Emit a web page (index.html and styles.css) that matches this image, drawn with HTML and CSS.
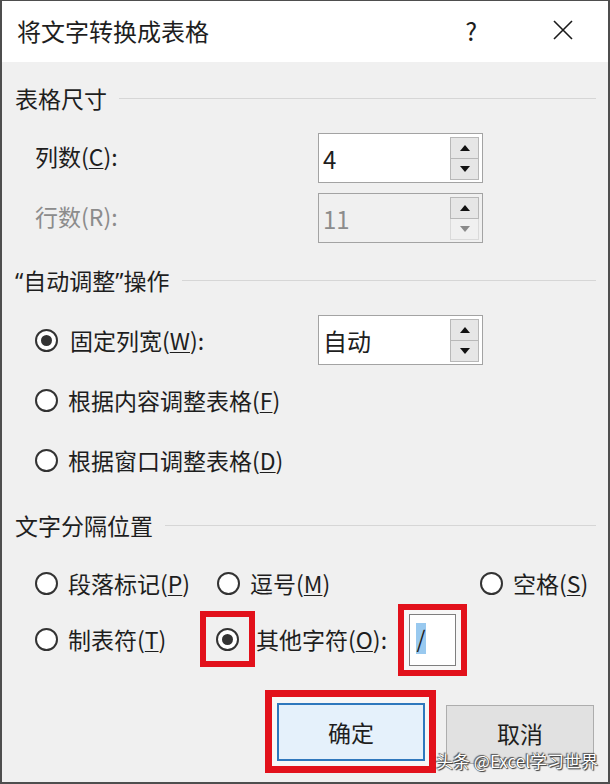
FILE: index.html
```html
<!DOCTYPE html>
<html lang="zh-CN">
<head>
    <meta charset="UTF-8">
    <meta name="viewport" content="width=device-width, initial-scale=1.0">
    <title>将文字转换成表格</title>
    <link rel="stylesheet" href="styles.css">
</head>
<body>
    <div class="window">
        <div class="titlebar">
            <span class="title">将文字转换成表格</span>
            <span class="help">?</span>
            <span class="close">
                <svg width="22" height="22" viewBox="0 0 22 22">
                    <path d="M2 2 L20 20 M20 2 L2 20" stroke="#1a1a1a" stroke-width="1.6" fill="none"/>
                </svg>
            </span>
        </div>

        <div class="content">
            <div class="group-title first">表格尺寸</div>

            <div class="row">
                <span class="field-label">列数(<u>C</u>):</span>
                <div class="spinner">
                    <span class="value">4</span>
                    <div class="spin">
                        <span class="spin-btn"><i class="arrow-up"></i></span>
                        <span class="spin-btn"><i class="arrow-down"></i></span>
                    </div>
                </div>
            </div>

            <div class="row">
                <span class="field-label disabled">行数(R):</span>
                <div class="spinner is-disabled">
                    <span class="value">11</span>
                    <div class="spin">
                        <span class="spin-btn"><i class="arrow-up"></i></span>
                        <span class="spin-btn off"><i class="arrow-down"></i></span>
                    </div>
                </div>
            </div>

            <div class="group-title"><span><span class="quote">“</span>自动调整<span class="quote">”</span>操作</span></div>

            <div class="row">
                <span class="option fixed">
                    <span class="radio checked"></span>
                    <span>固定列宽(<u>W</u>):</span>
                </span>
                <div class="spinner">
                    <span class="value">自动</span>
                    <div class="spin">
                        <span class="spin-btn"><i class="arrow-up"></i></span>
                        <span class="spin-btn"><i class="arrow-down"></i></span>
                    </div>
                </div>
            </div>

            <div class="row">
                <span class="option">
                    <span class="radio"></span>
                    <span>根据内容调整表格(<u>F</u>)</span>
                </span>
            </div>

            <div class="row">
                <span class="option">
                    <span class="radio"></span>
                    <span>根据窗口调整表格(<u>D</u>)</span>
                </span>
            </div>

            <div class="group-title third">文字分隔位置</div>

            <div class="row sep-row">
                <span class="option col-a">
                    <span class="radio"></span>
                    <span>段落标记(<u>P</u>)</span>
                </span>
                <span class="option col-b">
                    <span class="radio"></span>
                    <span>逗号(<u>M</u>)</span>
                </span>
                <span class="option">
                    <span class="radio"></span>
                    <span>空格(<u>S</u>)</span>
                </span>
            </div>

            <div class="row sep-row second">
                <span class="option col-t">
                    <span class="radio"></span>
                    <span>制表符(<u>T</u>)</span>
                </span>
                <span class="mark mark-radio">
                    <span class="radio checked"></span>
                </span>
                <span class="other-label">其他字符(<u>O</u>):</span>
                <span class="mark mark-input">
                    <span class="char-input"><span class="selected">/</span></span>
                </span>
            </div>

            <div class="buttons">
                <span class="mark mark-ok">
                    <span class="btn btn-default">确定</span>
                </span>
                <span class="btn">取消</span>
            </div>
        </div>

        <span class="watermark">头条 @Excel学习世界</span>
    </div>
</body>
</html>
```

FILE: styles.css
```css
body {
    margin: 0;
    font-family: "Noto Sans CJK SC", "Microsoft YaHei", sans-serif;
    color: #1e1e1e;
}

.window {
    position: relative;
    width: 610px;
    height: 784px;
    box-sizing: border-box;
    border: 2px solid #4e4e4e;
    border-top-width: 1px;
    background: #f0f0f0;
    display: flex;
    flex-direction: column;
}

/* title bar */
.titlebar {
    height: 61px;
    flex-shrink: 0;
    background: #fff;
    display: flex;
    align-items: center;
    padding-left: 15px;
    padding-bottom: 3px;
    box-sizing: border-box;
}

.title {
    flex: 1;
    font-size: 24px;
}

.help {
    font-size: 25px;
    margin-right: 75px;
}

.close {
    display: flex;
    margin-right: 34px;
}

/* dialog body */
.content {
    flex: 1;
    display: flex;
    flex-direction: column;
    padding: 0 12px 0 13px;
    font-size: 23px;
}

u {
    text-underline-offset: 2px;
    text-decoration-thickness: 1px;
}

.group-title {
    height: 30px;
    display: flex;
    align-items: center;
    gap: 12px;
    margin-top: 17px;
}

.group-title::after {
    content: "";
    flex: 1;
    border-top: 1px solid #d6d6d6;
}

.group-title.first {
    margin-top: 21px;
}

.group-title.third {
    margin-top: 20px;
}

.quote {
    font-family: "Noto Sans", sans-serif;
}

.row {
    height: 60px;
    display: flex;
    align-items: center;
    padding-left: 20px;
}

.group-title + .row {
    margin-top: 15px;
}

.field-label {
    flex: 0 0 283px;
    margin-bottom: 4px;
}

.disabled {
    color: #8c8c8c;
}

/* spin boxes */
.spinner {
    width: 165px;
    height: 50px;
    box-sizing: border-box;
    border: 1px solid #a3a3a3;
    background: #fff;
    display: flex;
    align-items: center;
    justify-content: space-between;
    padding: 3px 3px 2px 4px;
}

.spinner .value {
    font-size: 24px;
}

.spinner.is-disabled {
    background: #f0f0f0;
}

.spinner.is-disabled .value {
    color: #8c8c8c;
}

.spin {
    width: 29px;
    height: 100%;
    display: flex;
    flex-direction: column;
}

.spin-btn {
    flex: 1;
    display: flex;
    align-items: center;
    justify-content: center;
    background: #e6e6e6;
    border: 1px solid #b8b8b8;
}

.spin-btn + .spin-btn {
    border-top: none;
}

.spin-btn.off {
    background: #f0f0f0;
    border-color: #dadada;
}

.arrow-up,
.arrow-down {
    width: 0;
    height: 0;
    border-left: 5px solid transparent;
    border-right: 5px solid transparent;
}

.arrow-up {
    border-bottom: 6px solid #111;
}

.arrow-down {
    border-top: 6px solid #111;
}

.off .arrow-down {
    border-top-color: #8a8a8a;
}

/* radio options */
.option {
    display: flex;
    align-items: center;
    gap: 10px;
}

.option.fixed {
    flex: 0 0 283px;
    gap: 12px;
}

.radio {
    width: 23px;
    height: 23px;
    box-sizing: border-box;
    border: 2px solid #333;
    border-radius: 50%;
    background: #fff;
    display: flex;
    align-items: center;
    justify-content: center;
    flex-shrink: 0;
}

.radio.checked::after {
    content: "";
    width: 11px;
    height: 11px;
    border-radius: 50%;
    background: #333;
}

.sep-row {
    height: 56px;
    margin-top: 1px;
}

.sep-row.second {
    height: 56px;
    margin-top: 0;
}

.col-a {
    flex: 0 0 182px;
}

.col-b {
    flex: 0 0 263px;
}

.col-t {
    flex: 0 0 165px;
}

/* red highlight boxes */
.mark {
    border: 6px solid #e2111b;
    box-sizing: border-box;
    display: flex;
    align-items: center;
    justify-content: center;
    flex-shrink: 0;
}

.mark-radio {
    width: 55px;
    height: 56px;
}

.other-label {
    margin-left: 1px;
}

.mark-input {
    width: 69px;
    height: 72px;
    margin-left: 11px;
    margin-top: 2px;
    background: #f7f7f7;
}

.char-input {
    width: 47px;
    height: 52px;
    box-sizing: border-box;
    border: 1px solid #7f7f7f;
    background: #fff;
    padding: 6px 0 0 6px;
}

.selected {
    display: inline-block;
    width: 10px;
    line-height: 31px;
    background: #99c9ef;
    text-align: center;
}

/* buttons */
.buttons {
    margin-top: auto;
    margin-bottom: 9px;
    display: flex;
    justify-content: flex-end;
    align-items: flex-start;
    gap: 10px;
    padding-right: 2px;
}

.mark-ok {
    border-width: 7px;
    padding: 6px 4px 5px 5px;
    background: #f7f7f7;
}

.btn {
    width: 148px;
    height: 59px;
    box-sizing: border-box;
    display: flex;
    align-items: center;
    justify-content: center;
    background: #e1e1e1;
    border: 1px solid #adadad;
    margin-top: 15px;
    padding-bottom: 4px;
}

.btn-default {
    height: 58px;
    margin-top: 0;
    background: #e5f1fb;
    border: 2px solid #2f78bd;
    padding-bottom: 0;
}

.watermark {
    position: absolute;
    right: 10px;
    bottom: 13px;
    font-size: 17px;
    line-height: 1;
    color: #fff;
    text-shadow: 0 0 1px #333, 1px 1px 1px #333, -1px -1px 1px #555;
}
```
